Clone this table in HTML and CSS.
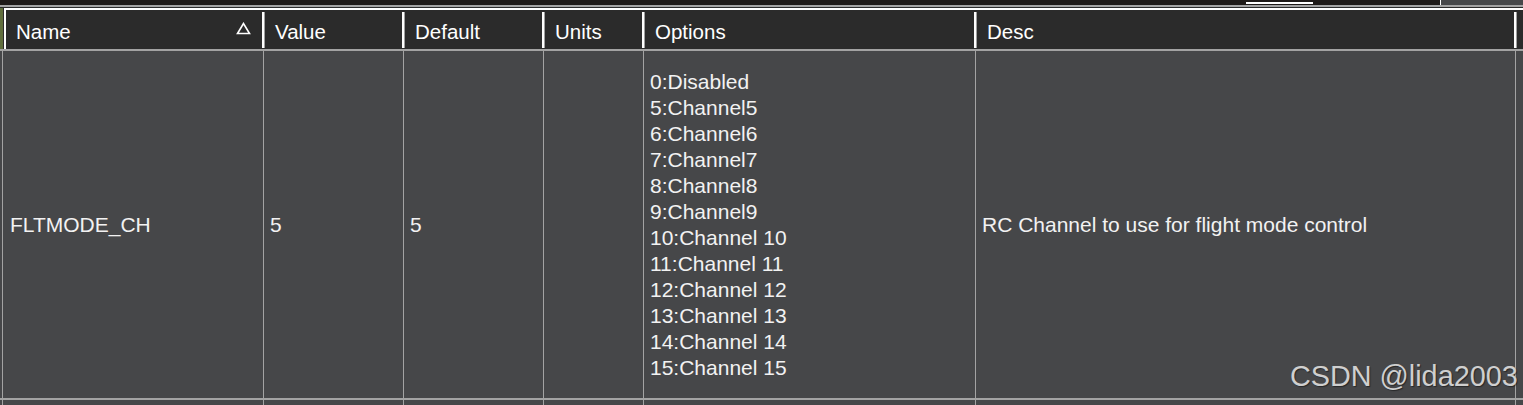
FILE: index.html
```html
<!DOCTYPE html>
<html>
<head>
<meta charset="utf-8">
<link rel="stylesheet" href="styles.css">
</head>
<body>
<div class="page">
  <div class="topbar">
    <div class="thumb"></div>
    <div class="toppanel"></div>
  </div>
  <div class="rule-gray"></div>
  <div class="rule-dark"></div>
  <div class="headwrap">
    <div class="olive"></div>
    <div class="header">
      <div class="hcell w1"><span class="htext">Name</span><svg class="sort" width="15" height="13" viewBox="0 0 15 13"><polygon points="7.5,1.5 1.5,11.5 13.5,11.5" fill="none" stroke="#ffffff" stroke-width="1.6"/></svg><span class="sep"></span></div>
      <div class="hcell w2"><span class="htext">Value</span><span class="sep"></span></div>
      <div class="hcell w3"><span class="htext">Default</span><span class="sep"></span></div>
      <div class="hcell w4"><span class="htext">Units</span><span class="sep"></span></div>
      <div class="hcell w5"><span class="htext">Options</span><span class="sep"></span></div>
      <div class="hcell w6"><span class="htext">Desc</span><span class="sep"></span></div>
    </div>
  </div>
  <div class="rule-head"></div>
  <div class="row main">
    <div class="cell c1">FLTMODE_CH</div>
    <div class="cell c2">5</div>
    <div class="cell c3">5</div>
    <div class="cell c4"></div>
    <div class="cell c5">
      <div class="opts">
        <div>0:Disabled</div>
        <div>5:Channel5</div>
        <div>6:Channel6</div>
        <div>7:Channel7</div>
        <div>8:Channel8</div>
        <div>9:Channel9</div>
        <div>10:Channel 10</div>
        <div>11:Channel 11</div>
        <div>12:Channel 12</div>
        <div>13:Channel 13</div>
        <div>14:Channel 14</div>
        <div>15:Channel 15</div>
      </div>
    </div>
    <div class="cell c6">RC Channel to use for flight mode control</div>
    <div class="cell c7"></div>
  </div>
  <div class="row next">
    <div class="cell c1"></div>
    <div class="cell c2"></div>
    <div class="cell c3"></div>
    <div class="cell c4"></div>
    <div class="cell c5"></div>
    <div class="cell c6"></div>
    <div class="cell c7"></div>
  </div>
  <div class="watermark">CSDN @lida2003</div>
</div>
</body>
</html>
```

FILE: styles.css
```css
html, body {
  margin: 0;
  padding: 0;
}
body {
  background: #464749;
  font-family: "Liberation Sans", Arial, sans-serif;
  color: #f2f2f2;
}
.page {
  position: relative;
  width: 1523px;
  height: 405px;
  overflow: hidden;
  background: #464749;
}
.topbar {
  height: 5px;
  background: #1e1a18;
  display: flex;
}
.thumb {
  margin-left: 1246px;
  margin-top: 2px;
  width: 67px;
  height: 2px;
  background: #ffffff;
}
.toppanel {
  margin-left: auto;
  width: 82px;
  height: 5px;
  background: #47484a;
  border-left: 1px solid #ffffff;
}
.rule-gray {
  height: 2px;
  background: #a3a3a3;
}
.rule-dark {
  height: 1px;
  background: #2b2b2b;
}
.headwrap {
  display: flex;
  height: 41px;
  background: #2b2b2b;
}
.olive {
  width: 3px;
  background: #5f6d3c;
}
.header {
  flex: 1;
  display: flex;
  border-top: 2px solid #ffffff;
  border-left: 2px solid #ffffff;
  margin-left: 1px;
  height: 39px;
}
.hcell {
  display: flex;
  align-items: center;
  font-size: 20.5px;
  color: #ffffff;
}
.htext {
  flex: 1;
  padding-left: 10px;
  padding-top: 4px;
  white-space: nowrap;
}
.sort {
  margin-right: 11px;
  margin-top: -2px;
}
.sep {
  width: 2px;
  height: 36px;
  background: #ffffff;
  border-right: 1px solid #a0a0a0;
  align-self: center;
}
.w1 { width: 259px; }
.w2 { width: 140px; }
.w3 { width: 140px; }
.w4 { width: 100px; }
.w5 { width: 332px; }
.w6 { width: 540px; }
.rule-head {
  height: 2px;
  background: #a3a3a3;
}
.row {
  display: flex;
  padding-left: 2px;
}
.row.main {
  height: 347px;
  border-bottom: 2px solid #a3a3a3;
}
.row.next {
  height: 10px;
}
.cell {
  border-left: 1px solid #a3a3a3;
  box-sizing: border-box;
  display: flex;
  align-items: center;
  padding-left: 6px;
  padding-top: 1px;
  font-size: 21px;
  white-space: nowrap;
}
.c1 { width: 261px; padding-left: 7px; }
.c2 { width: 140px; }
.c3 { width: 140px; }
.c4 { width: 100px; }
.c5 { width: 332px; }
.c6 { width: 540px; }
.c7 { width: 8px; padding-left: 0; }
.opts {
  line-height: 26px;
}
.watermark {
  position: absolute;
  left: 1290px;
  top: 360px;
  font-family: "Liberation Sans", Arial, sans-serif;
  font-size: 28.8px;
  color: #cfcfcf;
  text-shadow: 1px 1px 1px rgba(0, 0, 0, 0.45);
  white-space: nowrap;
}
```
